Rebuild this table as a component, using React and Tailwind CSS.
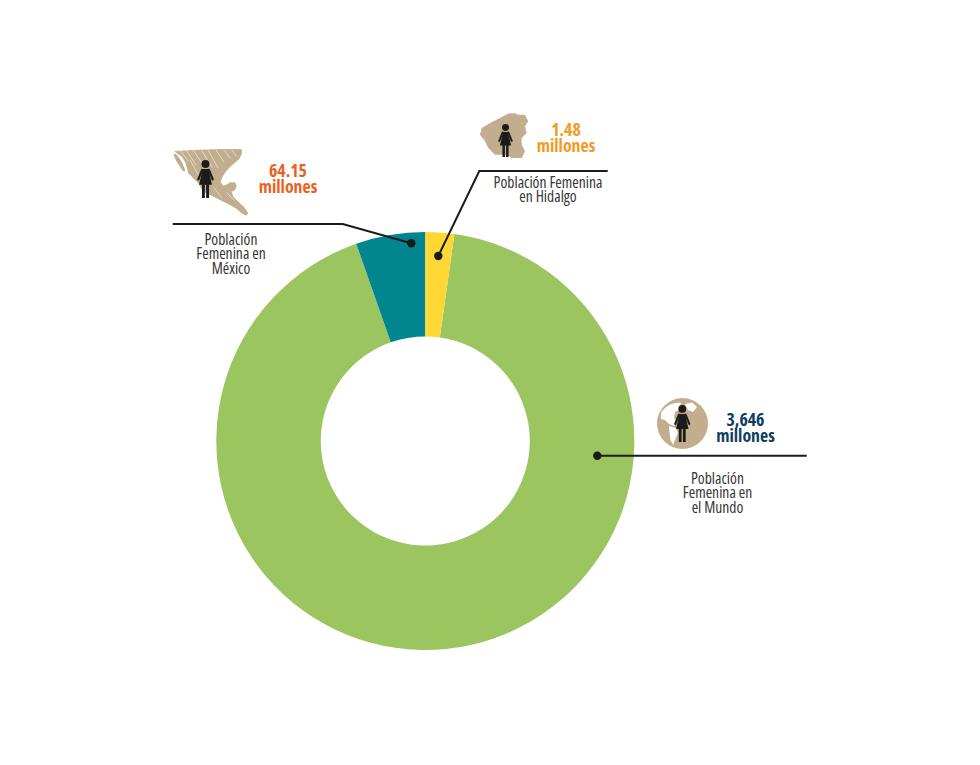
import React from "react";

const CX = 425.3, CY = 441, R = 209, RI = 104.5;

function pt(a, rad) {
  const t = (a * Math.PI) / 180;
  return `${(CX + rad * Math.sin(t)).toFixed(2)},${(CY - rad * Math.cos(t)).toFixed(2)}`;
}
function ring(a0, a1) {
  const large = a1 - a0 > 180 ? 1 : 0;
  return `M${pt(a0, R)} A${R} ${R} 0 ${large} 1 ${pt(a1, R)} L${pt(a1, RI)} A${RI} ${RI} 0 ${large} 0 ${pt(a0, RI)} Z`;
}

function Woman({ className }) {
  return (
    <svg viewBox="0 0 20 40" className={className}>
      <circle cx="10" cy="4.3" r="4.2" fill="#1b1b1b" />
      <path d="M7 9.6 H13 L16.8 26 H3.2 Z" fill="#1b1b1b" />
      <path d="M6.4 10.4 L2.4 20.5 M13.6 10.4 L17.6 20.5" stroke="#1b1b1b" strokeWidth="2.3" strokeLinecap="round" />
      <rect x="6.3" y="25.5" width="3" height="14.5" fill="#1b1b1b" />
      <rect x="10.7" y="25.5" width="3" height="14.5" fill="#1b1b1b" />
    </svg>
  );
}

function MexicoMap() {
  return (
    <svg viewBox="0 0 78 68" className="absolute inset-0 h-full w-full">
      <path
        d="M2 3 L24.7 1.7 L48 1 L69.7 1 L70 5.3 L67.3 11 L63 14.7 L58.3 18.7 L54 23.5 L50.5 29 L48.5 34.3 L51.3 37.7 L55.3 36.3 L58 34.3 L63 34.3 L64.7 37.7 L63 42 L59.7 43.7 L61.3 48.7 L66.3 53.7 L72 58.7 L76.3 65.3 L74 67.7 L69.7 65.3 L64.7 61 L58 57 L51.3 53.7 L44.7 50.3 L38 47 L31.3 43.7 L26.3 35.3 L21.3 30.3 L16.3 25.3 L14.7 18.7 L13 13.7 L9.7 8.7 L4.7 5.3 Z"
        fill="#c2ae8e"
      />
      <path d="M1.5 5.5 L4.5 6.5 L7.5 10.3 L10.5 15.3 L12.5 20.3 L13.2 23.7 L10.7 23 L8 18.7 L4.7 13.7 L2.3 8.7 Z" fill="#c2ae8e" />
      <g stroke="#ffffff" strokeWidth="0.8" opacity="0.7" strokeLinecap="round" fill="none">
        <path d="M8 2 L16 13" />
        <path d="M14 2 L24 17" />
        <path d="M21 2 L30 15" />
        <path d="M30 3 L40 19" />
        <path d="M36 2 L46 20" />
        <path d="M44 2 L52 14" />
        <path d="M52 2 L58 10" />
        <path d="M60 2 L64 8" />
        <path d="M18 12 L28 30" />
        <path d="M42 40 L50 50" />
        <path d="M55 45 L62 52" />
      </g>
      <path d="M2 3 L24.7 1.7 L48 1 L69.7 1" stroke="#ffffff" strokeWidth="0.6" strokeDasharray="1.5 2" fill="none" opacity="0.7" />
    </svg>
  );
}

function HidalgoMap() {
  return (
    <svg viewBox="0 0 51 46" className="absolute inset-0 h-full w-full">
      <path
        d="M2.7 15 L11 10 L21 5 L29.3 0.5 L36 0.3 L39.3 1.7 L46 1.7 L49.3 8.3 L46 13.3 L47.7 20 L42.7 25 L42.7 31.7 L46 38.3 L42.7 45 L32.7 45 L27.7 41.7 L16 41.7 L9.3 35 L6 28.3 L1 21.7 Z"
        fill="#c2ae8e"
      />
    </svg>
  );
}

function Globe() {
  return (
    <svg viewBox="0 0 51 51" className="absolute inset-0 h-full w-full">
      <circle cx="25.5" cy="25.5" r="25.5" fill="#c2ae8e" />
      <path d="M4 15 C8 8 16 4 24 5 L22 12 L18 14 L17 20 L20 24 L17 28 L12 26 L8 22 L4 21 Z" fill="#ffffff" />
      <path d="M12 28 L19 30 L21 35 L18 42 L16 47 L13.5 42 L12.5 35 Z" fill="#ffffff" />
      <path d="M28 6 L35 4.5 L40 9 L36 14 L31 12 Z" fill="#ffffff" />
    </svg>
  );
}

const FONT = "[font-family:'Open_Sans','Roboto',sans-serif]";
const NUM = "text-center text-[17.8px] font-bold [font-stretch:80%]";
const LABEL = "text-center text-[15.6px] font-medium [font-stretch:82%] text-[#363636]";

export default function App() {
  return (
    <div className={`relative h-[765px] w-[980px] overflow-hidden bg-white ${FONT}`}>
      <svg width="980" height="765" className="absolute inset-0">
        <path d={ring(8, 340.7)} fill="#9bc55f" />
        <path d={ring(-19.3, 0)} fill="#018690" />
        <path d={ring(0, 8)} fill="#fdd835" />
        <g stroke="#1b1b1b" strokeWidth="2" fill="none">
          <path d="M172.7 224 H342.7 L411.3 243.3" />
          <path d="M607.7 171 H479.3 L438.3 256" />
          <path d="M597.3 455.7 H806.7" />
        </g>
        <circle cx="411.3" cy="243.3" r="4.2" fill="#1b1b1b" />
        <circle cx="438.3" cy="256" r="4.2" fill="#1b1b1b" />
        <circle cx="597.3" cy="455.7" r="4.2" fill="#1b1b1b" />
      </svg>

      {/* México */}
      <div className="absolute left-[172px] top-[148px] flex flex-col">
        <div className="flex items-start">
          <div className="relative h-[68px] w-[78px] shrink-0">
            <MexicoMap />
            <Woman className="absolute left-[24px] top-[12px] h-[38px] w-[19px]" />
          </div>
          <div className={`-ml-[2px] mt-[14px] w-[80px] leading-[16px] text-[#e8621e] ${NUM}`}>
            64.15<br />millones
          </div>
        </div>
        <div className={`ml-[9px] mt-[15.5px] w-[100px] leading-[14.5px] ${LABEL}`}>
          Población<br />Femenina en<br />México
        </div>
      </div>

      {/* Hidalgo */}
      <div className="absolute left-[479px] top-[113px] flex flex-col">
        <div className="flex items-start">
          <div className="relative h-[46px] w-[51px] shrink-0">
            <HidalgoMap />
            <Woman className="absolute left-[17.5px] top-[11px] h-[33px] w-[17px]" />
          </div>
          <div className={`ml-[-1px] mt-[7.8px] w-[74px] leading-[16.5px] text-[#f39a1f] ${NUM}`}>
            1.48<br />millones
          </div>
        </div>
        <div className={`-ml-[1px] mt-[15.5px] w-[140px] leading-[14px] ${LABEL}`}>
          Población Femenina<br />en Hidalgo
        </div>
      </div>

      {/* Mundo */}
      <div className="absolute left-[656.5px] top-[397.5px] flex flex-col">
        <div className="flex items-start">
          <div className="relative h-[51px] w-[51px] shrink-0">
            <Globe />
            <Woman className="absolute left-[16px] top-[7.5px] h-[37px] w-[18.5px]" />
          </div>
          <div className={`mt-[13.1px] w-[76px] leading-[16.3px] text-[#0f3e5e] ${NUM}`}>
            3,646<br />millones
          </div>
        </div>
        <div className={`ml-[11px] mt-[22px] w-[100px] leading-[14.5px] ${LABEL}`}>
          Población<br />Femenina en<br />el Mundo
        </div>
      </div>
    </div>
  );
}
